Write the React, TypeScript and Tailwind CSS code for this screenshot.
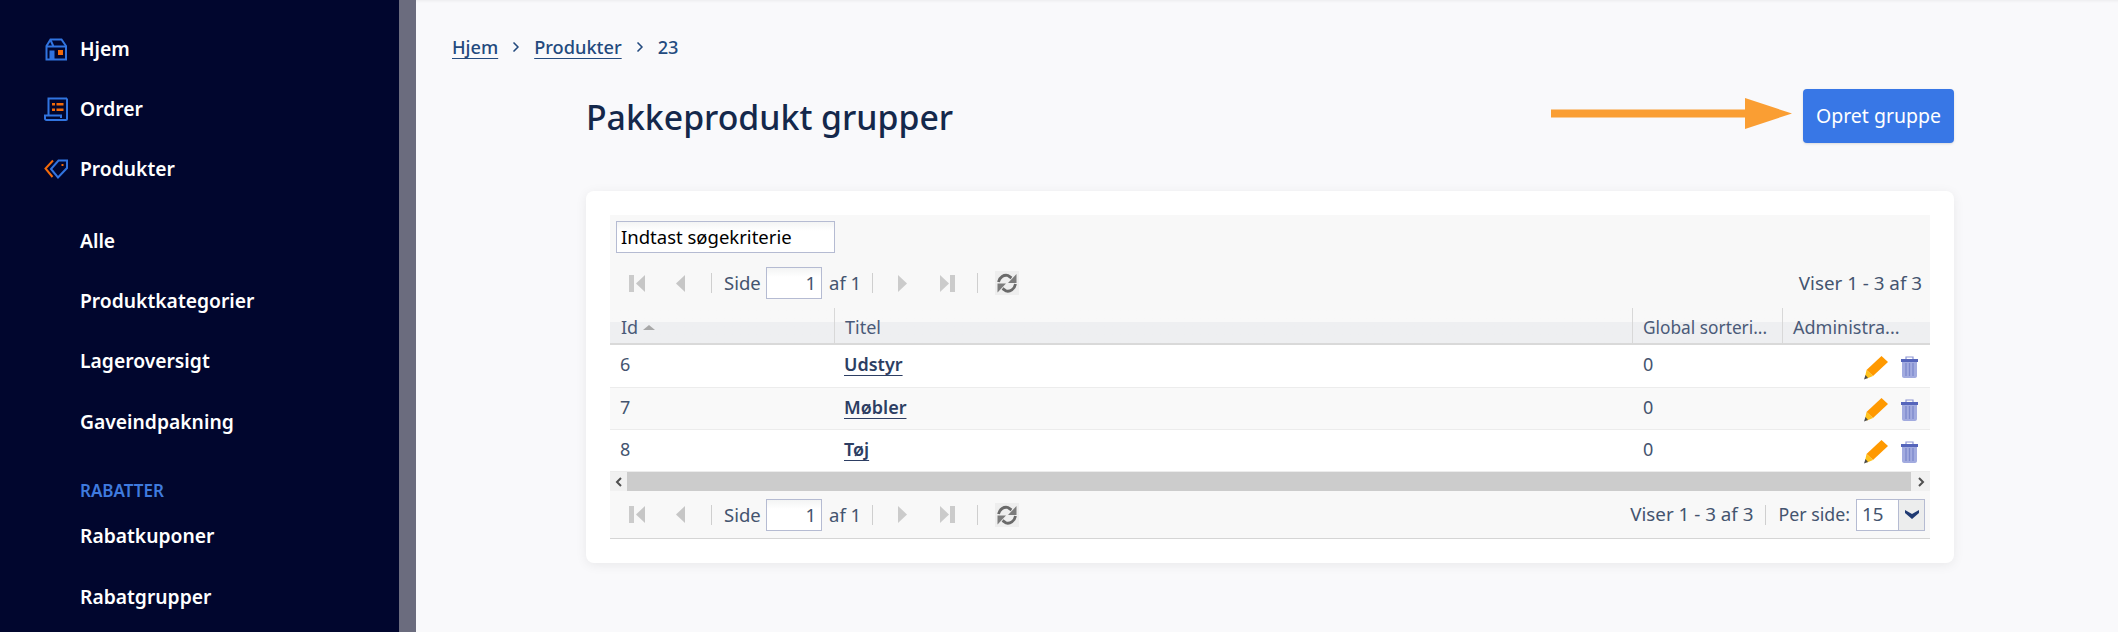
import { ChevronRight } from 'lucide-react'

const font = "[font-family:'Noto_Sans',sans-serif]"

function HomeIcon() {
  return (
    <svg width="24" height="24" viewBox="0 0 24 24" fill="none" className="shrink-0">
      <path d="M2.5 22.5V9L6.5 2.5H17.5L22 9V22.5H2.5Z" stroke="#3174e0" strokeWidth="2" />
      <path d="M2 9.5H9.5L6.5 3M9.5 9.5H22" stroke="#3174e0" strokeWidth="2" />
      <path d="M5.5 22.5V13.5H10.5V22.5" fill="#3174e0" />
      <rect x="14" y="13" width="5" height="5" fill="#f26a0a" />
    </svg>
  )
}

function OrderIcon() {
  return (
    <svg width="24" height="24" viewBox="0 0 24 24" fill="none" className="shrink-0">
      <path d="M23 1.5H4.5V18M23 1.5V22C23 22.6 22.4 23 22 23H2.5C1.6 23 1 22.4 1 21.5V18.5H17V21" stroke="#3174e0" strokeWidth="2" />
      <rect x="8" y="6" width="3" height="2.5" fill="#f26a0a" />
      <rect x="12.5" y="6" width="7" height="2.5" fill="#f26a0a" />
      <rect x="8" y="11.5" width="3" height="2.5" fill="#f26a0a" />
      <rect x="12.5" y="11.5" width="7" height="2.5" fill="#f26a0a" />
    </svg>
  )
}

function TagIcon() {
  return (
    <svg width="24" height="20" viewBox="0 0 24 20" fill="none" className="shrink-0">
      <path d="M9 1.5L1.5 9.5L8.5 18" stroke="#f26a0a" strokeWidth="2" />
      <path d="M14.5 1.5H23V9L14 18.5L7 10Z" stroke="#3174e0" strokeWidth="2" />
      <rect x="17.5" y="5" width="2" height="2" fill="#f26a0a" />
    </svg>
  )
}

function Pencil() {
  return (
    <svg width="24" height="25" viewBox="0 0 24 25" className="shrink-0">
      <path d="M17.5 1L24 7L9 21L2.5 15Z" fill="#ff9900" />
      <path d="M2.5 15L9 21L3 23.5L1 22Z" fill="#ffc21a" />
      <path d="M1.5 20L4 23L0 24.5Z" fill="#4a4a4a" />
    </svg>
  )
}

function Trash() {
  return (
    <svg width="17" height="22" viewBox="0 0 17 22" className="shrink-0">
      <path d="M5 3V1H12V3" fill="none" stroke="#8d96d4" strokeWidth="1.2" />
      <rect x="0" y="3" width="17" height="3" fill="#5565bb" />
      <path d="M1 6H16V20C16 21 15 22 14 22H3C2 22 1 21 1 20Z" fill="#a2abdf" />
      <path d="M5 7V20M8.5 7V20M12 7V20" stroke="#7d89cc" strokeWidth="1.3" />
    </svg>
  )
}

function SeekIcon({ dir, bar }: { dir: 'left' | 'right'; bar?: boolean }) {
  return (
    <svg width="16" height="19" viewBox="0 0 16 19" className="shrink-0">
      {dir === 'left' ? (
        <>
          {bar && <rect x="0" y="1" width="5" height="17" fill="#cbcbcb" />}
          <path d={bar ? 'M16 1V18L7 9.5Z' : 'M11 1V18L2 9.5Z'} fill="#c6c6c6" />
        </>
      ) : (
        <>
          <path d={bar ? 'M1 1V18L10 9.5Z' : 'M3 1V18L12 9.5Z'} fill="#cbcbcb" />
          {bar && <rect x="11" y="1" width="5" height="17" fill="#cbcbcb" />}
        </>
      )}
    </svg>
  )
}

function Refresh() {
  return (
    <div className="flex h-6 w-6 items-center justify-center bg-[#eeeeee]">
      <svg width="24" height="24" viewBox="0 0 24 24" fill="none">
        <path d="M3.5 11C4.5 6 9 3.5 13 4.5L16.5 7" stroke="#6a6a6a" strokeWidth="2.8" />
        <path d="M21.5 3V12H13Z" fill="#7c7c7c" />
        <path d="M20.5 13C19.5 18.5 15 21 11 20L7.5 17.5" stroke="#6a6a6a" strokeWidth="2.8" />
        <path d="M2.5 21.5V12.5H11Z" fill="#7c7c7c" />
      </svg>
    </div>
  )
}

function Divider({ className }: { className: string }) {
  return <div className={`h-[20px] w-px bg-[#cfcfcf] ${className}`} />
}

function Pager() {
  return (
    <div className="flex items-center whitespace-nowrap text-[18.5px] text-[#44546f]">
      <div className="ml-[19px] flex items-center gap-[29px]">
        <SeekIcon dir="left" bar />
        <SeekIcon dir="left" />
      </div>
      <Divider className="ml-[21px] mr-[12px]" />
      <span className="w-[37px]">Side</span>
      <div className="ml-[5px] mr-[7px] flex h-[32px] w-[56px] items-center justify-end border border-[#b5bbd2] bg-gradient-to-b from-[#f3f4f4] to-white to-30% pr-[5px]">1</div>
      <span className="w-[31px]">af 1</span>
      <Divider className="ml-[12px]" />
      <div className="ml-[22px] flex items-center gap-[28px]">
        <SeekIcon dir="right" />
        <SeekIcon dir="right" bar />
      </div>
      <Divider className="ml-[22px]" />
      <div className="ml-[17px]"><Refresh /></div>
    </div>
  )
}

const navTop = [
  { label: 'Hjem', icon: <HomeIcon /> },
  { label: 'Ordrer', icon: <OrderIcon /> },
  { label: 'Produkter', icon: <TagIcon /> },
]
const navSub = ['Alle', 'Produktkategorier', 'Lageroversigt', 'Gaveindpakning']
const navRabat = ['Rabatkuponer', 'Rabatgrupper']
const rows = [
  { id: 6, title: 'Udstyr', height: 'h-[43px]' },
  { id: 7, title: 'Møbler', height: 'h-[42px]' },
  { id: 8, title: 'Tøj', height: 'h-[42px]' },
]

export default function App() {
  return (
    <div className={`flex h-screen overflow-hidden bg-[#f9f9fb] ${font}`}>
      {/* Sidebar */}
      <aside className="h-full w-[399px] shrink-0 overflow-hidden bg-[#01062e] pt-[19px] text-[19.3px] font-semibold text-white">
        {navTop.map((item) => (
          <div key={item.label} className="flex h-[60px] items-center pl-[44px]">
            <div className="flex w-[36px] justify-start">{item.icon}</div>
            <span>{item.label}</span>
          </div>
        ))}
        <div className="mt-[12px] pl-[80px]">
          {navSub.map((label) => (
            <div key={label} className="flex h-[60.3px] items-center">{label}</div>
          ))}
          <div className="mt-[27px] text-[17px] leading-[24px] text-[#3f7ade]">RABATTER</div>
          <div className="mt-[3px]">
            {navRabat.map((label) => (
              <div key={label} className="flex h-[60.6px] items-center">{label}</div>
            ))}
          </div>
        </div>
      </aside>
      <div className="h-full w-[17px] shrink-0 bg-[#6b6c7e]" />

      {/* Main */}
      <main className="min-w-0 flex-1 shadow-[inset_0_3px_3px_-2px_rgba(0,0,0,0.06)]">
        <nav className="flex items-center pl-[36px] pt-[34px] text-[18.2px] font-medium leading-[26px] text-[#234a7e]">
          <a className="underline underline-offset-4">Hjem</a>
          <ChevronRight className="mx-[10px] h-4 w-4" strokeWidth={2.5} />
          <a className="underline underline-offset-4">Produkter</a>
          <ChevronRight className="mx-[10px] h-4 w-4" strokeWidth={2.5} />
          <span>23</span>
        </nav>

        <div className="ml-[170px] w-[1368px]">
          <div className="mt-[29px] flex h-[54px] items-center">
            <h1 className="flex-1 pt-[3px] text-[33.8px] font-medium text-[#14284b]">Pakkeprodukt grupper</h1>
            <svg width="241" height="32" viewBox="0 0 241 32" className="mb-[4px] mr-[11px]">
              <path d="M0 11.5H194V0L241 15.5L194 31V19.5H0Z" fill="#fa9e33" />
            </svg>
            <button className="flex h-[54px] w-[151px] items-center justify-center rounded-[4px] bg-[#3877e6] text-[19.5px] text-white shadow-sm">Opret gruppe</button>
          </div>

          {/* Card */}
          <section className="mt-[48px] h-[372px] rounded-[8px] bg-white p-[24px] shadow-[0_2px_12px_rgba(0,0,0,0.07)]">
            <div className="bg-[#f8f8f8]">
              <div className="px-[6px] pt-[6px]">
                <div className="flex h-[32px] w-[219px] items-center border border-[#b5bbd2] bg-gradient-to-b from-[#f3f4f4] to-white to-30% px-[4px] text-[18.5px] text-black">Indtast søgekriterie</div>
              </div>
              <div className="flex h-[55px] items-center justify-between pr-[8px] pt-[5px]">
                <Pager />
                <span className="text-[18.8px] text-[#44546f]">Viser 1 - 3 af 3</span>
              </div>

              <div className="flex h-[37px] border-b-2 border-[#d9d9d9] bg-gradient-to-b from-[#f8f8f8] from-40% to-[#eeeff1] to-40% text-[18px] text-[#4a5a78]">
                <div className="flex w-[225px] items-center border-r border-[#d8d8d8] pl-[11px] pt-[4px]">
                  Id<span className="ml-[5px] h-0 w-0 border-x-[6px] border-b-[5px] border-x-transparent border-b-[#a8a8a8]" />
                </div>
                <div className="flex w-[798px] items-center border-r border-[#d8d8d8] pl-[10px] pt-[4px]">Titel</div>
                <div className="flex w-[150px] items-center border-r border-[#d8d8d8] pl-[10px] pt-[4px] text-[17.3px]">Global sorteri...</div>
                <div className="flex flex-1 items-center pl-[10px] pt-[4px]">Administra...</div>
              </div>

              {rows.map((row, i) => (
                <div key={row.id} className={`flex border-b border-[#ececec] text-[18px] leading-[26px] text-[#44546f] ${row.height} ${i === 1 ? 'bg-[#f9f9f9]' : 'bg-white'}`}>
                  <div className="w-[225px] pl-[10px] pt-[6px]">{row.id}</div>
                  <div className="w-[798px] pl-[9px] pt-[6px] font-semibold text-[#2d3e63] underline underline-offset-4">{row.title}</div>
                  <div className="w-[150px] pl-[10px] pt-[6px]">0</div>
                  <div className="flex flex-1 items-center justify-end gap-[13px] pr-[12px] pt-[2px]">
                    <Pencil />
                    <Trash />
                  </div>
                </div>
              ))}

              {/* Horizontal scrollbar */}
              <div className="flex h-[19px] items-center justify-between bg-[#cccccc]">
                <div className="flex h-full w-[17px] items-center justify-center bg-[#f1f1f1] text-[#505050]">
                  <svg width="8" height="10" viewBox="0 0 8 10" fill="none"><path d="M6 1L2 5L6 9" stroke="currentColor" strokeWidth="2" /></svg>
                </div>
                <div className="flex h-full w-[19px] items-center justify-center bg-[#f1f1f1] text-[#505050]">
                  <svg width="8" height="10" viewBox="0 0 8 10" fill="none"><path d="M2 1L6 5L2 9" stroke="currentColor" strokeWidth="2" /></svg>
                </div>
              </div>

              <div className="flex h-[48px] items-center justify-between border-b border-[#d5d5d5] pr-[5px]">
                <Pager />
                <div className="flex items-center text-[18.8px] text-[#44546f]">
                  <span>Viser 1 - 3 af 3</span>
                  <Divider className="mx-[12px]" />
                  <span className="text-[17.8px]">Per side:</span>
                  <div className="ml-[6px] flex h-[32px] w-[69px] border border-[#b5bbd2]">
                    <div className="flex flex-1 items-center bg-white pl-[5px]">15</div>
                    <div className="flex w-[26px] items-center justify-center border-l border-[#b5bbd2] bg-[#eceded] text-[#1f3a72]">
                      <svg width="14" height="9" viewBox="0 0 14 9"><path d="M0 0L7 4L14 0V3L7 9L0 3Z" fill="currentColor" /></svg>
                    </div>
                  </div>
                </div>
              </div>
            </div>
          </section>
        </div>
      </main>
    </div>
  )
}
